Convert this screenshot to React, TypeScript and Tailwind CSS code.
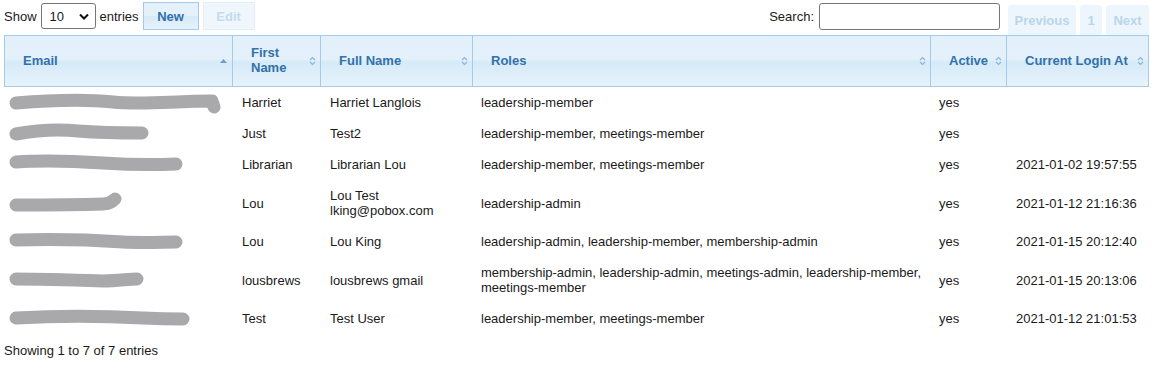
import React from "react";

type Row = {
  scribble: string;
  first: string;
  full: string;
  roles: string;
  active: string;
  login: string;
};

const rows: Row[] = [
  {
    scribble: "M3,8 C40,5 70,4 100,7 C130,10 160,6 199,6 L201,12",
    first: "Harriet",
    full: "Harriet Langlois",
    roles: "leadership-member",
    active: "yes",
    login: "",
  },
  {
    scribble: "M3,8 C25,4 45,3 65,5 C90,7 110,7 129,7",
    first: "Just",
    full: "Test2",
    roles: "leadership-member, meetings-member",
    active: "yes",
    login: "",
  },
  {
    scribble: "M3,5 C30,3 60,4 90,6 C120,8 140,8 163,7",
    first: "Librarian",
    full: "Librarian Lou",
    roles: "leadership-member, meetings-member",
    active: "yes",
    login: "2021-01-02 19:57:55",
  },
  {
    scribble: "M3,9 C30,9 60,9 90,8 C96,8 99,6 102,3",
    first: "Lou",
    full: "Lou Test lking@pobox.com",
    roles: "leadership-admin",
    active: "yes",
    login: "2021-01-12 21:16:36",
  },
  {
    scribble: "M3,6 C40,5 80,6 110,8 C130,9 150,8 163,8",
    first: "Lou",
    full: "Lou King",
    roles: "leadership-admin, leadership-member, membership-admin",
    active: "yes",
    login: "2021-01-15 20:12:40",
  },
  {
    scribble: "M3,6 C30,6 60,7 90,8 C105,8 115,6 124,6",
    first: "lousbrews",
    full: "lousbrews gmail",
    roles:
      "membership-admin, leadership-admin, meetings-admin, leadership-member, meetings-member",
    active: "yes",
    login: "2021-01-15 20:13:06",
  },
  {
    scribble: "M3,7 C40,5 90,5 130,7 C150,8 160,8 170,8",
    first: "Test",
    full: "Test User",
    roles: "leadership-member, meetings-member",
    active: "yes",
    login: "2021-01-12 21:01:53",
  },
];

function SortBoth() {
  return (
    <svg
      width="7"
      height="10"
      viewBox="0 0 7 10"
      className="absolute right-[4px] top-1/2 -translate-y-1/2"
    >
      <polyline points="1,4 3.5,1.5 6,4" fill="none" stroke="#8db3d6" strokeWidth="1.1" />
      <polyline points="1,6 3.5,8.5 6,6" fill="none" stroke="#8db3d6" strokeWidth="1.1" />
    </svg>
  );
}

function SortAsc() {
  return (
    <svg
      width="7"
      height="4"
      viewBox="0 0 7 4"
      className="absolute right-[5px] top-1/2 -translate-y-1/2"
    >
      <polygon points="0,4 3.5,0 7,4" fill="#6f9ec9" />
    </svg>
  );
}

const thBase =
  "relative border-t border-b border-r border-[#a6cbe8] pl-[18px] pr-[18px] pt-[9px] pb-[11px] text-left align-middle font-bold text-[#3271ab] leading-[15px]";

export default function App() {
  return (
    <div
      className="pl-[4px] text-[13px] leading-[15px] text-[#1a1a1a]"
      style={{ fontFamily: '"Liberation Sans", Arial, sans-serif' }}
    >
      {/* toolbar */}
      <div className="flex h-[35px] w-[1145px] items-start justify-between">
        <div className="flex items-start">
          <span className="mt-[9px]">Show</span>
          <div className="ml-[4px] mt-[3px] flex h-[26px] w-[55px] items-center justify-between rounded-[3px] border border-[#767676] bg-white pl-[8px] pr-[6px]">
            <span>10</span>
            <svg width="10" height="7" viewBox="0 0 10 7">
              <polyline points="1,1.5 5,5.5 9,1.5" fill="none" stroke="#111" strokeWidth="2" />
            </svg>
          </div>
          <span className="ml-[4px] mt-[9px]">entries</span>
          <button className="ml-[4px] mt-[2px] flex h-[28px] w-[56px] items-center justify-center border border-[#a6cbe8] bg-[linear-gradient(to_bottom,#e4f1fb_0%,#e4f1fb_48%,#d7eaf8_52%,#e6f2fc_100%)] font-bold text-[#3271ab]">
            New
          </button>
          <button className="ml-[4px] mt-[2px] flex h-[28px] w-[52px] items-center justify-center border border-[#e2eff9] bg-[#eff7fd] font-bold text-[#c3dbee]">
            Edit
          </button>
        </div>
        <div className="flex items-start">
          <span className="mt-[9px]">Search:</span>
          <div className="ml-[5px] mt-[3px] h-[27px] w-[181px] rounded-[3px] border border-[#767676] bg-white" />
          <div className="ml-[8px] mt-[5px] flex gap-[4px]">
            <span className="flex h-[30px] w-[68px] items-center justify-center rounded-t-[3px] bg-[#eef6fd] font-bold text-[#bad5eb]">
              Previous
            </span>
            <span className="flex h-[30px] w-[22px] items-center justify-center rounded-t-[3px] bg-[#eef6fd] font-bold text-[#bad5eb]">
              1
            </span>
            <span className="flex h-[30px] w-[43px] items-center justify-center rounded-t-[3px] bg-[#eef6fd] font-bold text-[#bad5eb]">
              Next
            </span>
          </div>
        </div>
      </div>

      {/* table */}
      <table className="w-[1145px] table-fixed border-separate border-spacing-0">
        <colgroup>
          <col className="w-[229px]" />
          <col className="w-[88px]" />
          <col className="w-[152px]" />
          <col className="w-[458px]" />
          <col className="w-[76px]" />
          <col className="w-[142px]" />
        </colgroup>
        <thead>
          <tr className="bg-[linear-gradient(to_bottom,#e2f0fb_0%,#e4f1fb_46%,#d6eaf8_52%,#e7f3fc_100%)]">
            <th className={thBase + " border-l"}>
              Email
              <SortAsc />
            </th>
            <th className={thBase}>
              First Name
              <SortBoth />
            </th>
            <th className={thBase}>
              Full Name
              <SortBoth />
            </th>
            <th className={thBase}>
              Roles
              <SortBoth />
            </th>
            <th className={thBase}>
              Active
              <SortBoth />
            </th>
            <th className={thBase}>
              Current Login At
              <SortBoth />
            </th>
          </tr>
        </thead>
        <tbody>
          {rows.map((r, i) => (
            <tr key={i}>
              <td className="py-[8px] pl-[9px] pr-[9px] align-middle">
                <svg width="200" height="15" viewBox="0 0 200 15" className="block overflow-visible">
                  <path
                    d={r.scribble}
                    fill="none"
                    stroke="#a9a9ab"
                    strokeWidth="13"
                    strokeLinecap="round"
                    strokeLinejoin="round"
                  />
                </svg>
              </td>
              <td className="py-[8px] pl-[9px] pr-[9px] align-middle">{r.first}</td>
              <td className="py-[8px] pl-[9px] pr-[9px] align-middle">{r.full}</td>
              <td className="py-[8px] pl-[8px] pr-[9px] align-middle">{r.roles}</td>
              <td className="py-[8px] pl-[8px] pr-[9px] align-middle">{r.active}</td>
              <td className="py-[8px] pl-[9px] pr-[9px] align-middle">{r.login}</td>
            </tr>
          ))}
        </tbody>
      </table>
      <div className="pt-[9px]">Showing 1 to 7 of 7 entries</div>
    </div>
  );
}
